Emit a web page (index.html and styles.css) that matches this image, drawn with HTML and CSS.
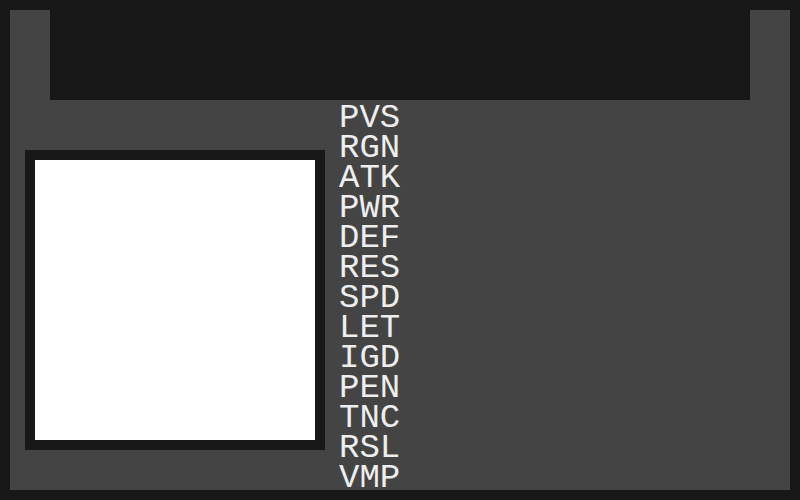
FILE: index.html
```html
<!DOCTYPE html>
<html>
<head>
<meta charset="utf-8">
<link rel="stylesheet" href="styles.css">
</head>
<body>
<div class="panel">
  <div class="topbar"></div>
  <div class="content">
    <div class="portrait"></div>
    <ul class="stats">
      <li>PVS</li>
      <li>RGN</li>
      <li>ATK</li>
      <li>PWR</li>
      <li>DEF</li>
      <li>RES</li>
      <li>SPD</li>
      <li>LET</li>
      <li>IGD</li>
      <li>PEN</li>
      <li>TNC</li>
      <li>RSL</li>
      <li>VMP</li>
    </ul>
  </div>
</div>
</body>
</html>
```
FILE: styles.css
```css
html, body {
  margin: 0;
  padding: 0;
  background: #181818;
  width: 800px;
  height: 500px;
}
.panel {
  margin: 10px;
  width: 780px;
  height: 480px;
  background: #444444;
  display: flex;
  flex-direction: column;
}
.topbar {
  margin: 0 40px;
  height: 90px;
  background: #181818;
  flex: none;
}
.content {
  display: flex;
  align-items: flex-start;
}
.portrait {
  margin: 50px 0 0 15px;
  width: 280px;
  height: 280px;
  border: 10px solid #181818;
  background: #ffffff;
  flex: none;
}
.stats {
  list-style: none;
  margin: 0 0 0 14px;
  padding: 3px 0 0 0;
  font-family: "Liberation Mono", monospace;
  font-size: 34px;
  line-height: 30px;
  color: #eeeeee;
}
.stats li {
  height: 30px;
}
```
